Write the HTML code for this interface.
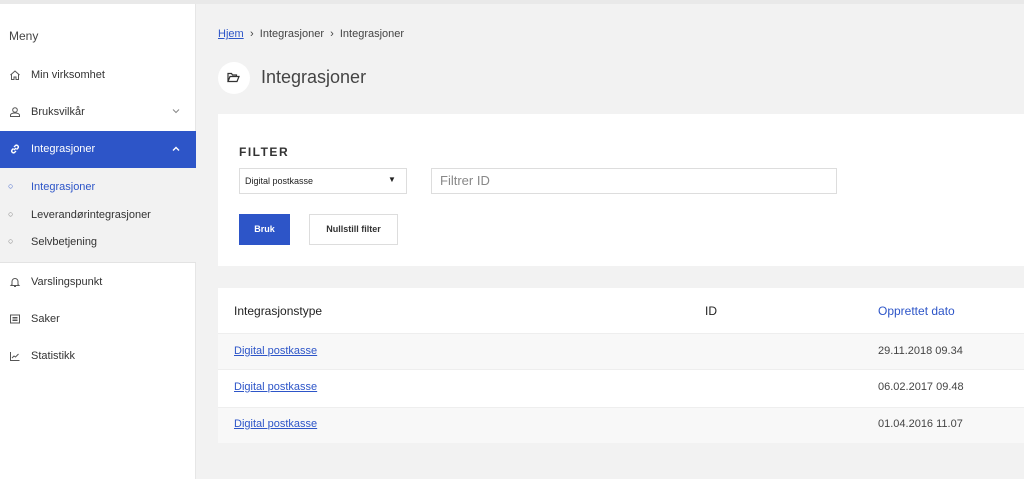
<!DOCTYPE html><html><head><style>
*{margin:0;padding:0;box-sizing:border-box}
body{width:1024px;height:479px;overflow:hidden;background:#f2f2f2;font-family:"Liberation Sans",sans-serif;position:relative;color:#333}
.top{position:absolute;left:0;top:0;width:1024px;height:4px;background:#e9e9e9}
.side{position:absolute;left:0;top:4px;width:196px;height:475px;background:#fff;border-right:1px solid #e6e6e6}
.a{position:absolute;font-size:11px;color:#333;white-space:nowrap}
.ic{position:absolute;left:9px;width:12px;height:12px}
.card{position:absolute;background:#fff}
</style></head><body>
<div class="top"></div>
<div class="side">
<div class="a" style="left:9px;top:25px;font-size:12px;color:#444">Meny</div>
<svg class="ic" style="top:65px" viewBox="0 0 12 12" fill="none" stroke="#555" stroke-width="1"><path d="M1.5 6L6 2l4.5 4M2.5 5.5V10.5h2.5V8h2v2.5h2.5V5.5"/></svg>
<div class="a" style="left:31px;top:65px">Min virksomhet</div>
<svg class="ic" style="top:102px" viewBox="0 0 12 12" fill="none" stroke="#555" stroke-width="1"><circle cx="6" cy="4" r="2.3"/><path d="M1.5 10.5h9V9c0-1.2-2-2-4.5-2S1.5 7.8 1.5 9z"/></svg>
<div class="a" style="left:31px;top:102px">Bruksvilkår</div>
<svg style="position:absolute;left:172px;top:104px" width="8" height="6" viewBox="0 0 8 6" fill="none" stroke="#888"><path d="M1 1.5l3 3 3-3"/></svg>
<div style="position:absolute;left:0;top:127px;width:196px;height:37px;background:#2d55c8"></div>
<svg class="ic" style="top:139px" viewBox="0 0 12 12" fill="none" stroke="#fff" stroke-width="1.4"><path d="M5 7l2-2M4.5 5.5L3 7a1.8 1.8 0 002.5 2.5L7 8M7.5 6.5L9 5A1.8 1.8 0 006.5 2.5L5 4"/></svg>
<div class="a" style="left:31px;top:139px;color:#fff">Integrasjoner</div>
<svg style="position:absolute;left:172px;top:142px" width="8" height="6" viewBox="0 0 8 6" fill="none" stroke="#fff" stroke-width="1.4"><path d="M1 4.5l3-3 3 3"/></svg>
<div style="position:absolute;left:0;top:164px;width:196px;height:95px;background:#f2f2f2;border-bottom:1px solid #e3e3e3"></div>
<div class="a" style="left:8px;top:177px;color:#2d55c8;font-size:9px">○</div><div class="a" style="left:31px;top:177px;color:#2d55c8">Integrasjoner</div>
<div class="a" style="left:8px;top:205px;color:#777;font-size:9px">○</div><div class="a" style="left:31px;top:205px">Leverandørintegrasjoner</div>
<div class="a" style="left:8px;top:232px;color:#777;font-size:9px">○</div><div class="a" style="left:31px;top:232px">Selvbetjening</div>
<svg class="ic" style="top:272px" viewBox="0 0 12 12" fill="none" stroke="#555"><path d="M3 8.5V5.5a3 3 0 016 0v3l1 1H2zM5 10.5h2"/></svg>
<div class="a" style="left:31px;top:272px">Varslingspunkt</div>
<svg class="ic" style="top:309px" viewBox="0 0 12 12" fill="none" stroke="#555"><rect x="1.5" y="2" width="9" height="8"/><path d="M3.5 4.5h5M3.5 6h5M3.5 7.5h5"/></svg>
<div class="a" style="left:31px;top:309px">Saker</div>
<svg class="ic" style="top:346px" viewBox="0 0 12 12" fill="none" stroke="#555"><path d="M1.5 2v8.5h9M3 8l2-2 1.5 1L9.5 4"/></svg>
<div class="a" style="left:31px;top:346px">Statistikk</div>
</div>
<div class="a" style="left:218px;top:28px;font-size:11px;color:#2d55c8;text-decoration:underline">Hjem</div>
<div class="a" style="left:250px;top:28px;font-size:11px;color:#444">›&nbsp; Integrasjoner &nbsp;›&nbsp; Integrasjoner</div>
<div style="position:absolute;left:218px;top:62px;width:32px;height:32px;border-radius:50%;background:#fff"></div>
<svg style="position:absolute;left:227px;top:72px" width="13" height="11" viewBox="0 0 13 11" fill="none" stroke="#333" stroke-width="1.2"><path d="M1 9.5V1.5h3.5l1 1.5h4v1.5M1 9.5l2-5h9l-2 5z"/></svg>
<div class="a" style="left:261px;top:67px;font-size:18px;color:#444">Integrasjoner</div>
<div class="card" style="left:218px;top:114px;width:806px;height:152px">
<div class="a" style="left:21px;top:31px;font-size:12px;font-weight:bold;letter-spacing:1.5px;color:#333">FILTER</div>
<div style="position:absolute;left:21px;top:54px;width:168px;height:26px;border:1px solid #ddd"></div>
<div class="a" style="left:27px;top:62px;font-size:9px;color:#222">Digital postkasse</div>
<div class="a" style="left:170px;top:61px;font-size:8px;color:#222">▼</div>
<div style="position:absolute;left:213px;top:54px;width:406px;height:26px;border:1px solid #ddd"></div>
<div class="a" style="left:222px;top:59px;font-size:13px;color:#888">Filtrer ID</div>
<div style="position:absolute;left:21px;top:100px;width:51px;height:31px;background:#2d55c8;color:#fff;font-size:9px;font-weight:bold;text-align:center;line-height:31px">Bruk</div>
<div style="position:absolute;left:91px;top:100px;width:89px;height:31px;border:1px solid #ddd;color:#333;font-size:9px;font-weight:bold;text-align:center;line-height:29px">Nullstill filter</div>
</div>
<div class="card" style="left:218px;top:288px;width:806px;height:155px">
<div class="a" style="left:16px;top:16px;font-size:12px;color:#222">Integrasjonstype</div>
<div class="a" style="left:487px;top:16px;font-size:12px;color:#222">ID</div>
<div class="a" style="left:660px;top:16px;font-size:12px;color:#2d55c8">Opprettet dato</div>
<div style="position:absolute;left:0;top:45px;width:806px;height:37px;background:#f8f8f8;border-top:1px solid #eee;border-bottom:1px solid #eee"></div>
<div style="position:absolute;left:0;top:119px;width:806px;height:36px;background:#f8f8f8;border-top:1px solid #eee"></div>
<div class="a" style="left:16px;top:57px;color:#2d55c8;text-decoration:underline">Digital postkasse</div>
<div class="a" style="left:660px;top:57px;color:#444">29.11.2018 09.34</div>
<div class="a" style="left:16px;top:93px;color:#2d55c8;text-decoration:underline">Digital postkasse</div>
<div class="a" style="left:660px;top:93px;color:#444">06.02.2017 09.48</div>
<div class="a" style="left:16px;top:130px;color:#2d55c8;text-decoration:underline">Digital postkasse</div>
<div class="a" style="left:660px;top:130px;color:#444">01.04.2016 11.07</div>
</div>
</body></html>
